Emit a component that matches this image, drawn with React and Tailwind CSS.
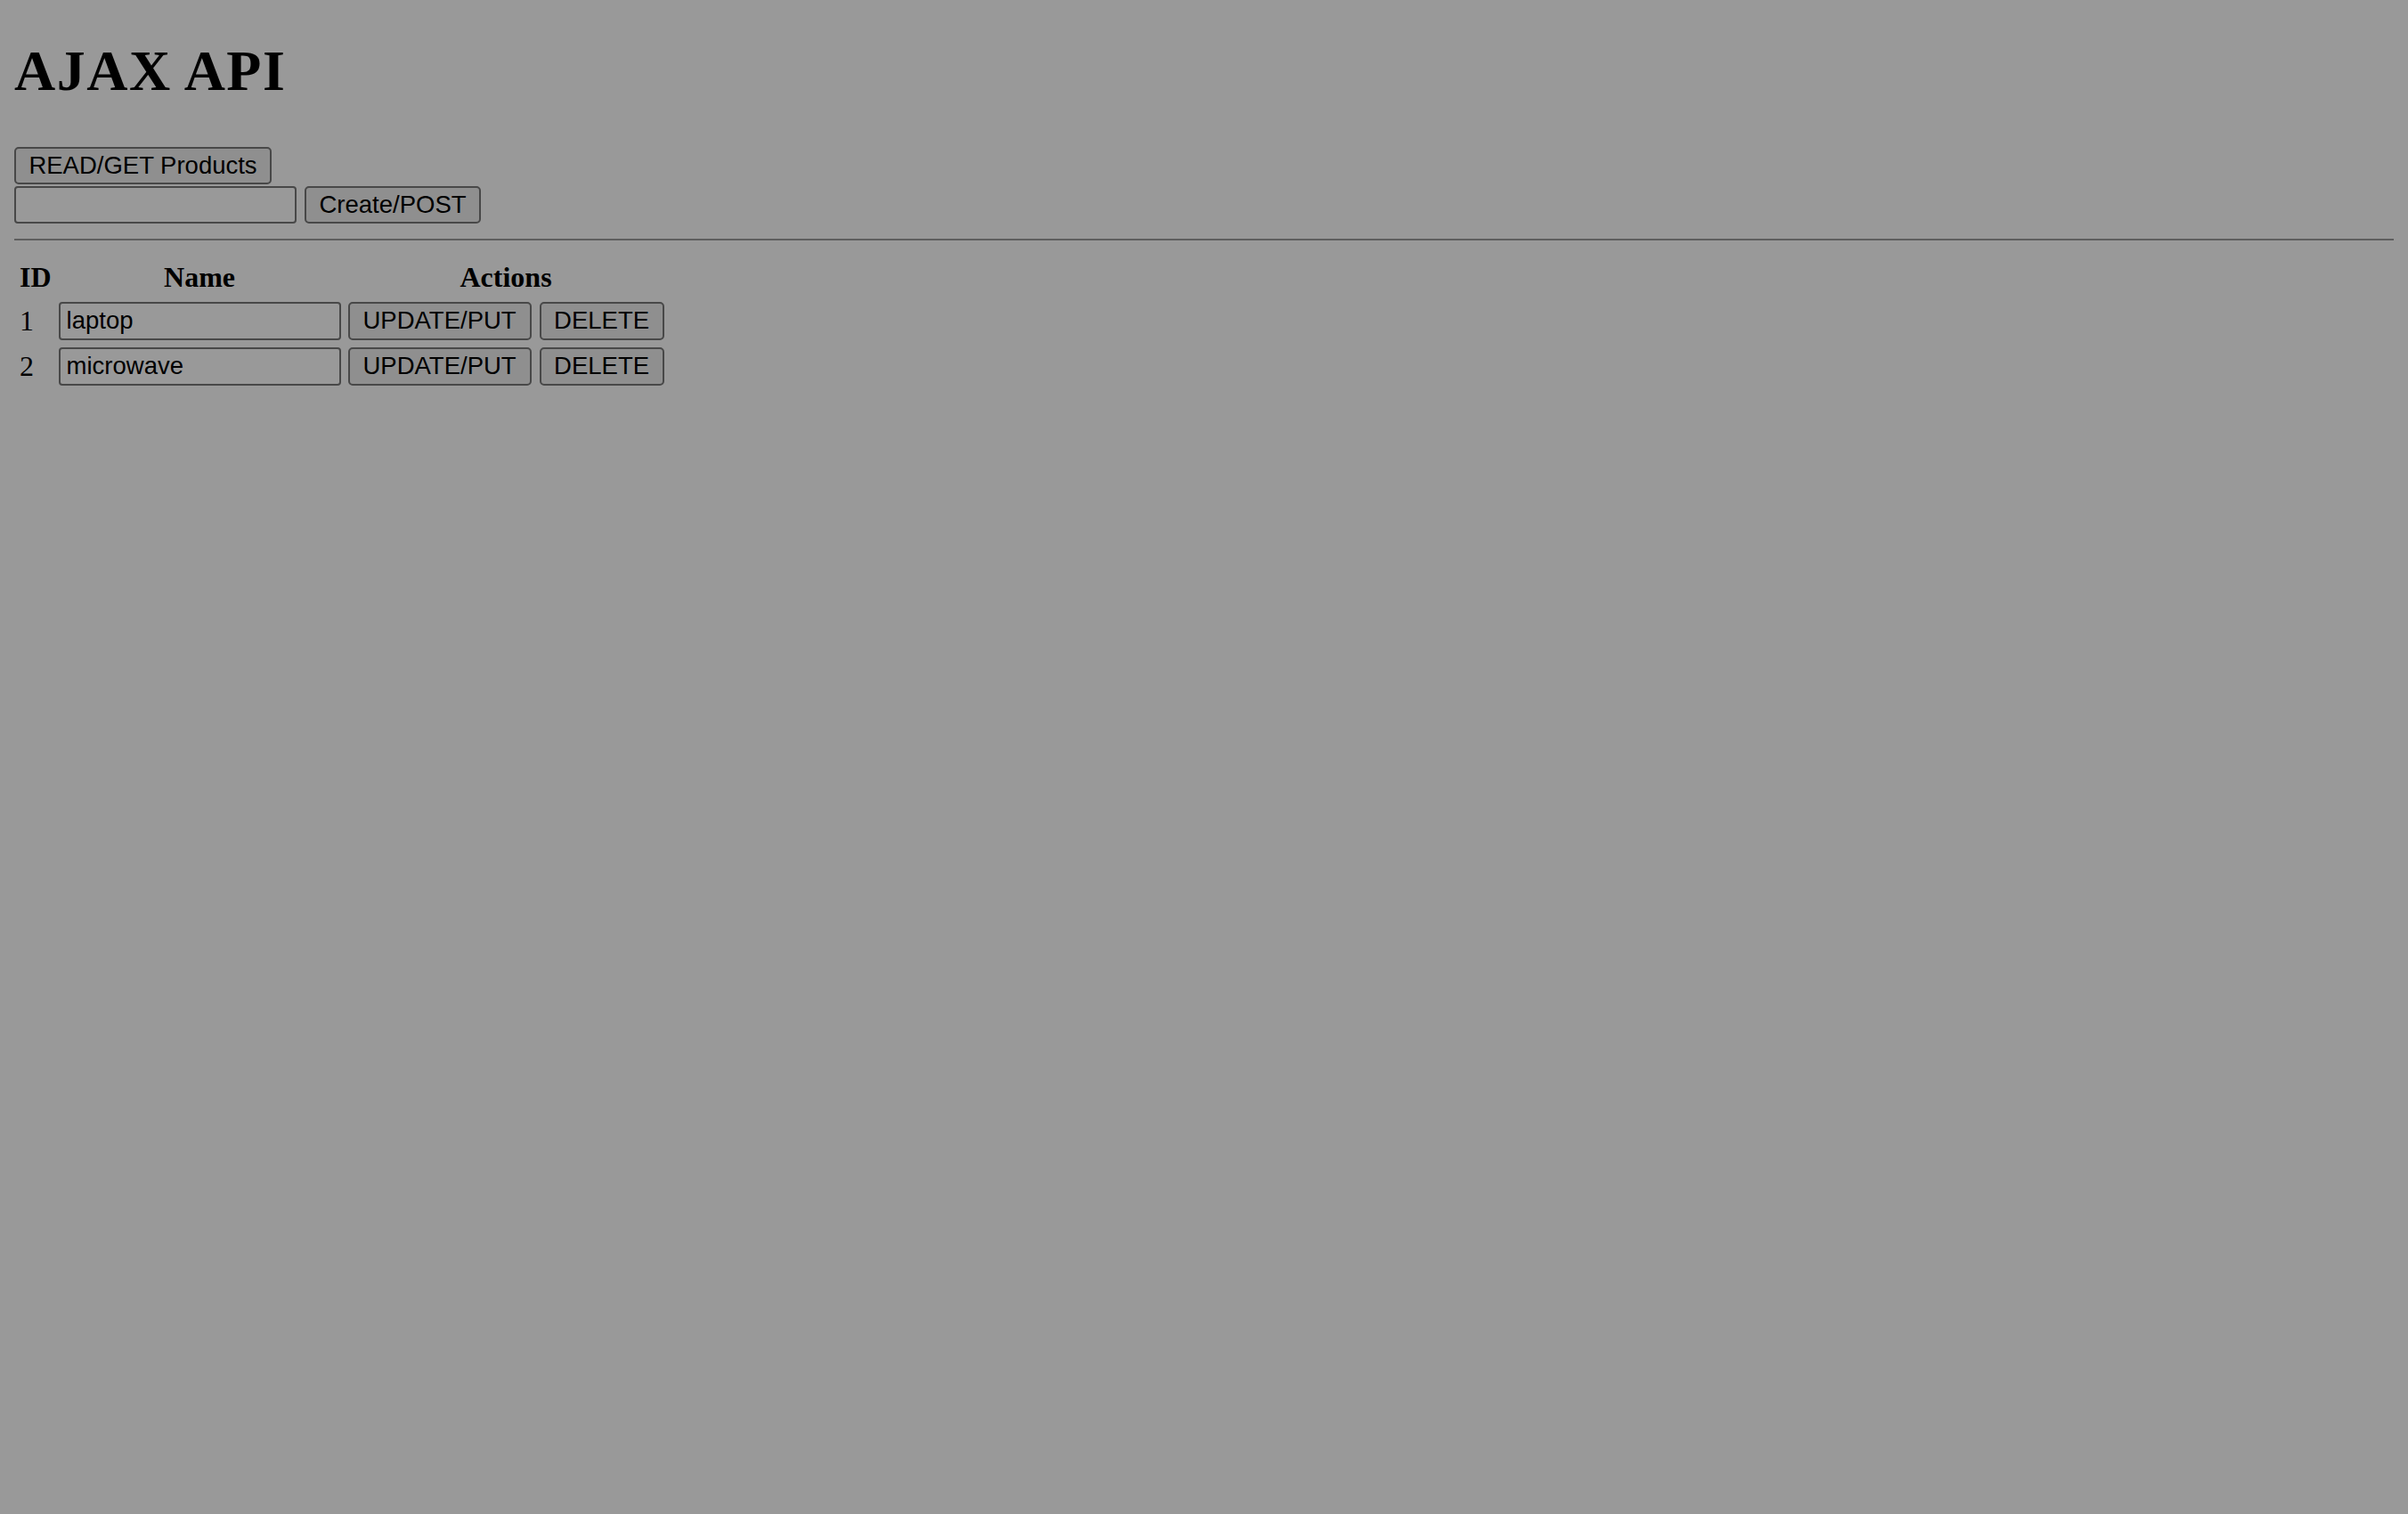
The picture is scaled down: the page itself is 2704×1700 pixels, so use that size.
function Btn({ w, h = "h-[42px]", children }) {
  return (
    <button className={`${w} ${h} shrink-0 rounded-[5px] border-2 border-[#484848] bg-[#8f8f8f] text-center font-['Liberation_Sans',Arial,sans-serif] text-[27.5px] leading-none text-black`}>
      {children}
    </button>
  )
}

function Field({ value, h = "h-[42px]" }) {
  return (
    <input
      defaultValue={value}
      className={`${h} w-[317px] shrink-0 rounded-[4px] border-2 border-[#484848] bg-transparent px-[7px] font-['Liberation_Sans',Arial,sans-serif] text-[27.5px] text-black outline-none`}
    />
  )
}

const products = [
  { id: 1, name: "laptop" },
  { id: 2, name: "microwave" },
]

export default function App() {
  return (
    <div className="min-h-[1700px] bg-[#999999] px-4 font-['Liberation_Serif','Times_New_Roman',serif] text-black">
      <h1 className="pt-[43px] pb-[43px] text-[64px] font-bold leading-[73.5px] tracking-[1.5px]">AJAX API</h1>

      <div className="pt-[5px]">
        <Btn w="w-[289px]">READ/GET Products</Btn>
      </div>
      <div className="mt-[2px] flex gap-[9px]">
        <Field value="" />
        <Btn w="w-[198px]">Create/POST</Btn>
      </div>

      <hr className="mt-[17px] border-0 border-t-2 border-[#5e5e5e]" />

      <table className="mt-[16px] border-separate border-spacing-[4px]">
        <thead>
          <tr>
            <th className="p-[2px] text-[32px] font-bold leading-[39px]">ID</th>
            <th className="p-[2px] text-[32px] font-bold leading-[39px]">Name</th>
            <th className="p-[2px] text-[32px] font-bold leading-[39px]">Actions</th>
          </tr>
        </thead>
        <tbody>
          {products.map((p) => (
            <tr key={p.id}>
              <td className="p-[2px] text-[32px] leading-[37px]">
                <div className="flex h-[43px] items-center">{p.id}</div>
              </td>
              <td className="p-[2px]">
                <div className="flex h-[43px] items-center">
                  <Field value={p.name} h="h-[43px]" />
                </div>
              </td>
              <td className="p-[2px]">
                <div className="flex h-[43px] items-center gap-[9px]">
                  <Btn w="w-[206px]" h="h-[43px]">UPDATE/PUT</Btn>
                  <Btn w="w-[140px]" h="h-[43px]">DELETE</Btn>
                </div>
              </td>
            </tr>
          ))}
        </tbody>
      </table>
    </div>
  )
}
